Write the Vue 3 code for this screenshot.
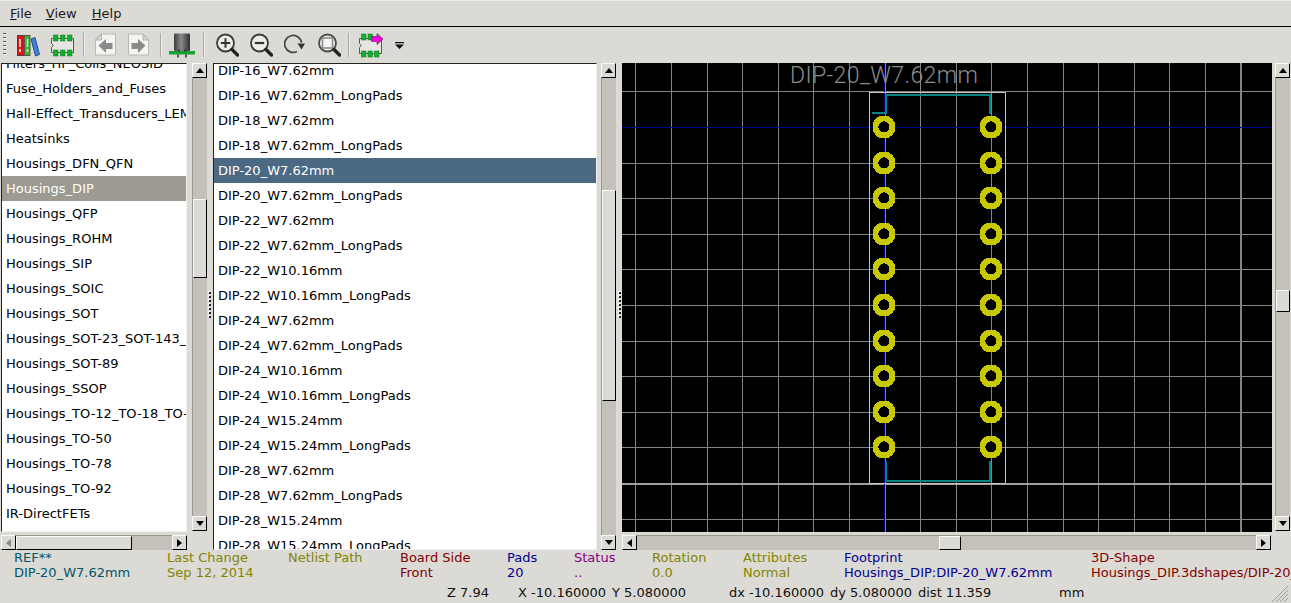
<script setup>
const leftItems = ['Filters_HF_Coils_NEOSID','Fuse_Holders_and_Fuses','Hall-Effect_Transducers_LEM','Heatsinks','Housings_DFN_QFN','Housings_DIP','Housings_QFP','Housings_ROHM','Housings_SIP','Housings_SOIC','Housings_SOT','Housings_SOT-23_SOT-143_TSOT-6','Housings_SOT-89','Housings_SSOP','Housings_TO-12_TO-18_TO-39','Housings_TO-50','Housings_TO-78','Housings_TO-92','IR-DirectFETs','Inductors']
const midItems = ['DIP-16_W7.62mm','DIP-16_W7.62mm_LongPads','DIP-18_W7.62mm','DIP-18_W7.62mm_LongPads','DIP-20_W7.62mm','DIP-20_W7.62mm_LongPads','DIP-22_W7.62mm','DIP-22_W7.62mm_LongPads','DIP-22_W10.16mm','DIP-22_W10.16mm_LongPads','DIP-24_W7.62mm','DIP-24_W7.62mm_LongPads','DIP-24_W10.16mm','DIP-24_W10.16mm_LongPads','DIP-24_W15.24mm','DIP-24_W15.24mm_LongPads','DIP-28_W7.62mm','DIP-28_W7.62mm_LongPads','DIP-28_W15.24mm','DIP-28_W15.24mm_LongPads']
const step = 35.6
const vLines = Array.from({ length: 18 }, (_, i) => Math.round(262.5 + (i - 7) * step))
const hLines = Array.from({ length: 14 }, (_, i) => Math.round(64 + (i - 1) * step))
const pads = []
for (let i = 0; i < 10; i++) {
  const y = Math.round(64 + i * step)
  pads.push({ x: 262, y }, { x: 369, y })
}
const info = [
  { l: 'REF**', v: 'DIP-20_W7.62mm', c: 'teal', w: 153 },
  { l: 'Last Change', v: 'Sep 12, 2014', c: 'olive', w: 121 },
  { l: 'Netlist Path', v: '', c: 'olive', w: 112 },
  { l: 'Board Side', v: 'Front', c: 'red', w: 107 },
  { l: 'Pads', v: '20', c: 'blue', w: 67 },
  { l: 'Status', v: '..', c: 'purple', w: 78 },
  { l: 'Rotation', v: '0.0', c: 'olive', w: 91 },
  { l: 'Attributes', v: 'Normal', c: 'olive', w: 101 },
  { l: 'Footprint', v: 'Housings_DIP:DIP-20_W7.62mm', c: 'blue', w: 247 },
  { l: '3D-Shape', v: 'Housings_DIP.3dshapes/DIP-20_W7.62mm.wrl', c: 'red', w: 200 }
]
const status = [
  { t: 'Z 7.94', w: 71 },
  { t: 'X -10.160000', w: 94 },
  { t: 'Y 5.080000', w: 117 },
  { t: 'dx -10.160000', w: 101 },
  { t: 'dy 5.080000', w: 88 },
  { t: 'dist 11.359', w: 141 },
  { t: 'mm', w: 40 }
]
</script>

<template>
  <div class="app">
    <nav class="menubar">
      <span class="menu"><u>F</u>ile</span>
      <span class="menu m-view"><u>V</u>iew</span>
      <span class="menu"><u>H</u>elp</span>
    </nav>

    <div class="toolbar">
      <div class="grip"></div>
      <svg class="t-books" width="23" height="23" viewBox="0 0 23 23">
        <rect x="0.5" y="1.5" width="7" height="20" fill="#d8141c" stroke="#5a3a30"/>
        <rect x="7.500" y="1.5" width="5.500" height="20" fill="#3cb43c" stroke="#5a5a40"/>
        <path d="M3 5v8M3 15v3" stroke="#fff" stroke-width="1.4"/>
        <path d="M10.500 5v8M10.500 15v3" stroke="#d8f0d0" stroke-width="1.4"/>
        <path d="M14 5l4-1.500 4.500 17-4 1.500z" fill="#3c80dc" stroke="#274e90"/>
      </svg>
      <svg class="t-chip" width="25" height="23" viewBox="0 0 25 23">
        <path d="M1.5 4.500h22v14h-22v-5l2-2-2-2z" fill="#e6e6e2" stroke="#555" stroke-width="1"/>
        <g fill="#10b030" stroke="#0a7a20" stroke-width=".5">
          <rect x="3.500" y="1" width="4.500" height="6"/><rect x="10.500" y="1" width="4.500" height="6"/><rect x="17.500" y="1" width="4.500" height="6"/>
          <rect x="3.500" y="16" width="4.500" height="6"/><rect x="10.500" y="16" width="4.500" height="6"/><rect x="17.500" y="16" width="4.500" height="6"/>
        </g>
      </svg>
      <i class="sep s1"></i>
      <svg class="t-prev" width="21" height="24" viewBox="0 0 21 24">
        <path d="M6 1h14.500v21h-20v-15.500z" fill="#f4f4f2" stroke="#b8b8b4"/>
        <path d="M.5 7h6V1z" fill="#d8d8d4" stroke="#b0b0ac"/>
        <path d="M3.500 12.500l7.500-6.500v4h6.500v6h-6.500v4z" fill="#8a8a88"/>
      </svg>
      <svg class="t-next" width="21" height="24" viewBox="0 0 21 24">
        <path d="M.5 1h14.500l5.500 5.500v15.500h-20z" fill="#f4f4f2" stroke="#b8b8b4"/>
        <path d="M15 1v6h5.500z" fill="#d8d8d4" stroke="#b0b0ac"/>
        <path d="M17.500 12.500l-7.500-6.500v4h-6.500v6h6.500v4z" fill="#8a8a88"/>
      </svg>
      <i class="sep s2"></i>
      <svg class="t-cap" width="26" height="25" viewBox="0 0 26 25">
        <defs>
          <linearGradient id="capg" x1="0" x2="1" y1="0" y2="0">
            <stop offset="0" stop-color="#3c3c3c"/><stop offset=".45" stop-color="#8a8a8a"/><stop offset="1" stop-color="#2e2e2e"/>
          </linearGradient>
        </defs>
        <path d="M5 1.500q0-1 1-1h14q1 0 1 1v15q0 2-2 2h-12q-2 0-2-2z" fill="url(#capg)"/>
        <rect x="0" y="18" width="26" height="3.500" fill="#18a030"/>
        <path d="M9 21.500v3M17 21.500v3" stroke="#222" stroke-width="1.400"/>
        <path d="M10 18.500v-2M16 18.500v-2" stroke="#222" stroke-width="1.400"/>
      </svg>
      <i class="sep s3"></i>
      <svg class="t-z1" width="23" height="24" viewBox="0 0 23 24">
        <circle cx="9.500" cy="10" r="8.500" fill="#ececea" stroke="#3a3a3a" stroke-width="1.800"/>
        <path d="M4.800 10h9.400M9.500 5.300v9.400" stroke="#333" stroke-width="2"/>
        <path d="M16 16.500l5.500 5.500" stroke="#222" stroke-width="3.400" stroke-linecap="round"/>
      </svg>
      <svg class="t-z2" width="23" height="24" viewBox="0 0 23 24">
        <circle cx="9.500" cy="10" r="8.500" fill="#ececea" stroke="#3a3a3a" stroke-width="1.800"/>
        <path d="M4.800 10h9.400" stroke="#333" stroke-width="2.200"/>
        <path d="M16 16.500l5.500 5.500" stroke="#222" stroke-width="3.400" stroke-linecap="round"/>
      </svg>
      <svg class="t-z3" width="21" height="24" viewBox="0 0 21 24">
        <path d="M13 18.500a8.500 8.500 0 1 1 4.500-9" fill="none" stroke="#444" stroke-width="1.800"/>
        <path d="M13.500 10.500h7.500l-3.500 6z" fill="#333"/>
      </svg>
      <svg class="t-z4" width="23" height="24" viewBox="0 0 23 24">
        <circle cx="9.500" cy="10" r="8.500" fill="#ececea" stroke="#4a4a4a" stroke-width="1.800"/>
        <rect x="4.500" y="5" width="10" height="10" fill="#f6f6f4" stroke="#8c8c8a" stroke-width="1.600"/>
        <path d="M16 16.500l5.500 5.500" stroke="#222" stroke-width="3.400" stroke-linecap="round"/>
      </svg>
      <i class="sep s4"></i>
      <svg class="t-exp" width="25" height="25" viewBox="0 0 25 25">
        <path d="M1.500 5.500h22v15h-22v-6l2-2-2-2z" fill="#e6e6e2" stroke="#555" stroke-width="1"/>
        <g fill="#10b030" stroke="#0a7a20" stroke-width=".5">
          <rect x="3.500" y="1" width="4.500" height="6"/><rect x="10" y="1" width="4.500" height="6"/>
          <rect x="3.500" y="18" width="4.500" height="6"/><rect x="10" y="18" width="4.500" height="6"/><rect x="16.500" y="18" width="4.500" height="6"/>
        </g>
        <path d="M13.500 3.500h5.500v-3l6 5.500-6 5.500v-3h-5.500z" fill="#ff00e6" stroke="#333" stroke-width=".6"/>
      </svg>
      <svg class="t-drop" width="9" height="7" viewBox="0 0 9 7">
        <path d="M0 0h9v1.300h-9zM0 2.500h9l-4.500 4.500z" fill="#111"/>
      </svg>
    </div>

    <div class="main">
      <section class="pane p-left">
        <div class="pane-top">
          <div class="list l-left">
            <div class="rows r-left">
              <div v-for="n in leftItems" :key="n" class="row" :class="{ 'sel-gray': n === 'Housings_DIP' }">{{ n }}</div>
            </div>
          </div>
          <div class="vbar vb-left">
            <button class="btn"><i class="a-up"></i></button>
            <div class="trough"><div class="thumb th1"></div></div>
            <button class="btn"><i class="a-down"></i></button>
          </div>
        </div>
        <div class="hbar hb-left">
          <button class="btn"><i class="a-left dim"></i></button>
          <div class="htrough"><div class="hthumb ht1"></div></div>
          <button class="btn"><i class="a-right"></i></button>
        </div>
      </section>

      <div class="sash sash1"><span v-for="n in 7" :key="n"></span></div>

      <section class="pane p-mid">
        <div class="list l-mid">
          <div class="rows r-mid">
            <div v-for="n in midItems" :key="n" class="row mid-row" :class="{ 'sel-blue': n === 'DIP-20_W7.62mm' }">{{ n }}</div>
          </div>
        </div>
        <div class="vbar vb-mid">
          <button class="btn"><i class="a-up"></i></button>
          <div class="trough"><div class="thumb th2"></div></div>
          <button class="btn"><i class="a-down"></i></button>
        </div>
      </section>

      <div class="sash sash2"><span v-for="n in 7" :key="n"></span></div>

      <section class="pane p-right">
        <div class="pane-top">
          <svg class="canvas" width="650" height="469" viewBox="0 0 650 469">
            <rect width="650" height="469" fill="#000"/>
            <g stroke="#848484" shape-rendering="crispEdges">
              <line v-for="x in vLines" :key="'v' + x" :x1="x + 0.5" y1="0" :x2="x + 0.5" y2="469"/>
              <line v-for="y in hLines" :key="'h' + y" x1="0" :y1="y + 0.5" x2="650" :y2="y + 0.5"/>
              <rect x="618" y="0" width="2" height="469" fill="#848484" stroke="none"/>
              <rect x="0" y="420" width="650" height="2" fill="#a0a0a0" stroke="none"/>
            </g>
            <path d="M0 64.500H650M262.500 0V469" stroke="#000084" stroke-width="1" shape-rendering="crispEdges"/>
            <rect x="247.500" y="29.500" width="136" height="391" fill="none" stroke="#c4c4c4" stroke-width="1" shape-rendering="crispEdges"/>
            <path d="M250 49.500H263.500V31.500H367.500V51M264 398V417.500H367.500V398" fill="none" stroke="#008484" stroke-width="2" shape-rendering="crispEdges"/>
            <g v-for="p in pads" :key="p.x + '-' + p.y">
              <circle :cx="p.x" :cy="p.y" r="11.500" fill="#c8c800" shape-rendering="crispEdges"/>
              <circle :cx="p.x" :cy="p.y" r="5.600" fill="#000" shape-rendering="crispEdges"/>
            </g>
            <text class="fp-title" x="168" y="20" textLength="188" lengthAdjust="spacing">DIP-20_W7.62mm</text>
          </svg>
          <div class="vbar vb-right">
            <button class="btn"><i class="a-up"></i></button>
            <div class="trough"><div class="thumb th3"></div></div>
            <button class="btn"><i class="a-down"></i></button>
          </div>
        </div>
        <div class="hbar hb-right">
          <button class="btn"><i class="a-left"></i></button>
          <div class="htrough"><div class="hthumb ht2"></div></div>
          <button class="btn"><i class="a-right"></i></button>
        </div>
      </section>
    </div>

    <footer class="bottom">
      <div class="info">
        <div v-for="c in info" :key="c.l" class="col" :class="c.c" :style="{ width: c.w + 'px' }">
          <div class="cell">{{ c.l }}</div>
          <div v-if="c.v" class="cell">{{ c.v }}</div>
        </div>
      </div>
      <div class="status">
        <span v-for="s in status" :key="s.t" :style="{ width: s.w + 'px' }">{{ s.t }}</span>
      </div>
      <svg class="resize" width="18" height="18" viewBox="0 0 18 18">
        <path d="M17 1L1 17M17 5L5 17M17 9L9 17M17 13L13 17" stroke="#9c9a94" stroke-width="1"/>
      </svg>
    </footer>
  </div>
</template>

<style>
html, body { margin: 0; background: #dcdad5; overflow: hidden; }
</style>

<style scoped>
.app {
  width: 1291px;
  height: 603px;
  overflow: hidden;
  position: relative;
  background: #dcdad5;
  font-family: "DejaVu Sans", sans-serif;
  font-size: 13px;
  color: #000;
}
.menubar {
  border-top: 1px solid #eeede9;
  box-sizing: border-box;
  border-bottom: 1px solid #000;
  height: 27px;
  display: flex;
  gap: 14px;
  padding-left: 10px;
  line-height: 26px;
  color: #1a1a1a;
}
.m-view { min-width: 32px; }
.toolbar {
  height: 36px;
  display: flex;
  align-items: center;
  position: relative;
}
.toolbar svg { flex: none; display: block; }
.grip {
  width: 3px;
  height: 24px;
  margin: 0 0 0 3px;
  background: repeating-linear-gradient(#555 0 1px, #f4f4f2 1px 2px, #dcdad5 2px 4px);
}
.t-books { margin-left: 11px; }
.t-chip { margin-left: 10px; }
.s1 { margin-left: 8px; }
.t-prev { margin-left: 10px; }
.t-next { margin-left: 12px; }
.s2 { margin-left: 11px; }
.t-cap { margin-left: 7px; }
.s3 { margin-left: 8px; }
.t-z1 { margin-left: 11px; }
.t-z2 { margin-left: 11px; }
.t-z3 { margin-left: 11px; }
.t-z4 { margin-left: 13px; }
.s4 { margin-left: 7px; }
.t-exp { margin-left: 8px; }
.t-drop { margin-left: 12px; }
.sep {
  display: block;
  width: 1px;
  height: 24px;
  background: #a8a6a0;
  border-right: 1px solid #f0efec;
  flex: none;
}
.main { display: flex; height: 487px; }
.pane { flex: none; }
.pane-top { display: flex; }
.p-left { width: 207px; padding-left: 1px; box-sizing: border-box; }
.p-mid { width: 404px; display: flex; }
.p-right { width: 669px; }
.list {
  background: #fff;
  overflow: hidden;
  box-sizing: border-box;
  border-left: 1px solid #222;
  border-top: 1px solid #222;
  border-right: 1px solid #f2f1ee;
  border-bottom: 1px solid #f2f1ee;
}
.l-left { width: 186px; height: 469px; }
.l-mid { width: 384px; height: 487px; }
.r-left { margin-top: -13px; }
.r-mid { margin-top: -6px; }
.row {
  height: 25px;
  line-height: 25px;
  padding-left: 4px;
  white-space: nowrap;
  color: #000;
}
.sel-gray { background: #9d9a91; color: #fff; }
.sel-blue { background: #4b6983; color: #fff; }

.vbar {
  width: 15px;
  display: flex;
  flex-direction: column;
  flex: none;
}
.vb-left { margin-left: 5px; height: 468px; }
.vb-mid { margin-left: 4px; height: 487px; }
.vb-right { margin-left: 3px; height: 468px; }
.hbar {
  display: flex;
  height: 15px;
  margin-top: 3px;
}
.hb-left { width: 186px; }
.hb-right { width: 649px; }
.btn {
  width: 15px;
  height: 15px;
  flex: none;
  padding: 0;
  margin: 0;
  background: #dcdad5;
  border: 1px solid;
  border-color: #fafaf8 #000 #000 #fafaf8;
  box-sizing: border-box;
  display: flex;
  align-items: center;
  justify-content: center;
}
.trough {
  flex: 1;
  background: #c3c1ba;
  border-left: 1px solid #9a9890;
  box-sizing: border-box;
  min-height: 0;
}
.htrough {
  flex: 1;
  background: #c3c1ba;
  border-top: 1px solid #9a9890;
  box-sizing: border-box;
  display: flex;
}
.thumb {
  background: #dcdad5;
  border: 1px solid;
  border-color: #fafaf8 #000 #000 #fafaf8;
  box-sizing: border-box;
}
.hthumb {
  background: #dcdad5;
  border: 1px solid;
  border-color: #fafaf8 #000 #000 #fafaf8;
  box-sizing: border-box;
  height: 14px;
}
.th1 { margin-top: 121px; height: 79px; }
.th2 { margin-top: 112px; height: 211px; }
.th3 { margin-top: 212px; height: 22px; }
.ht1 { width: 116px; }
.ht2 { margin-left: 302px; width: 22px; }
.a-up { border: 4px solid transparent; border-top: 0; border-bottom: 5px solid #000; width: 0; height: 0; display: block; }
.a-down { border: 4px solid transparent; border-bottom: 0; border-top: 5px solid #000; width: 0; height: 0; display: block; }
.a-left { border: 4px solid transparent; border-left: 0; border-right: 5px solid #000; width: 0; height: 0; display: block; }
.a-right { border: 4px solid transparent; border-right: 0; border-left: 5px solid #000; width: 0; height: 0; display: block; }
.a-left.dim { border-right-color: #8a8882; }

.sash {
  flex: none;
  display: flex;
  flex-direction: column;
  align-items: center;
  justify-content: flex-start;
  gap: 2px;
  padding-top: 229px;
  box-sizing: border-box;
}
.sash1 { width: 6px; }
.sash2 { width: 5px; }
.sash span {
  width: 2px;
  height: 2px;
  background: #222;
  box-shadow: -1px -1px 0 #fff;
}

.canvas { display: block; flex: none; }
.fp-title {
  font-family: Roboto, "Liberation Sans", sans-serif;
  font-weight: 300;
  font-size: 23px;
  fill: #8c8c8c;
}

.bottom { position: relative; height: 53px; }
.info {
  display: flex;
  padding-left: 14px;
  line-height: 15px;
  white-space: nowrap;
  overflow: hidden;
  height: 30px;
}
.col { flex: none; }
.cell { height: 15px; }
.teal { color: #00566b; }
.olive { color: #848400; }
.red { color: #840000; }
.blue { color: #000090; }
.purple { color: #840084; }
.status {
  display: flex;
  padding-left: 447px;
  line-height: 15px;
  margin-top: 5px;
  color: #111;
  white-space: nowrap;
}
.status span { flex: none; display: block; }
.resize { position: absolute; right: 2px; bottom: 0; }
</style>
